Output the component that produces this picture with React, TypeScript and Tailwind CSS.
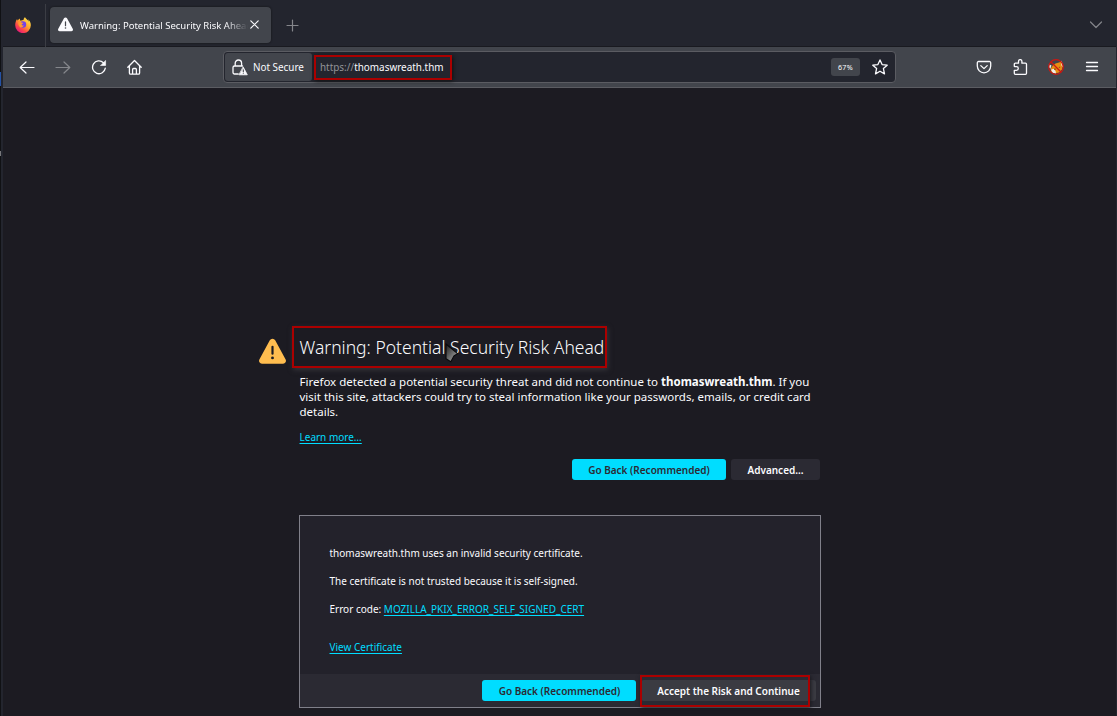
import React from "react";

type IconProps = { className?: string };

const stroke = {
  fill: "none",
  stroke: "currentColor",
  strokeWidth: 1.2,
  strokeLinecap: "round" as const,
  strokeLinejoin: "round" as const,
};

function FirefoxLogo({ className }: IconProps) {
  return (
    <svg viewBox="0 0 16 16" className={className}>
      <defs>
        <linearGradient id="flame" x1="0.85" y1="0.1" x2="0.2" y2="0.95">
          <stop offset="0" stopColor="#ffe14a" />
          <stop offset="0.4" stopColor="#ffa52b" />
          <stop offset="0.7" stopColor="#ff4a48" />
          <stop offset="1" stopColor="#e3157c" />
        </linearGradient>
      </defs>
      <path fill="url(#flame)" d="M15 4.8c-.4-1-1.200-2-1.900-2.300.5 1 .7 1.600.8 2.200C12.500 2 10.800 2 10 .2 9 .9 8.600 2.200 8.500 3 7.400 3 6.500 3.300 5.700 3.800 5 3.300 4.800 2.300 5 1.600 3.900 2 3.100 2.900 2.700 3.500 2.300 3.200 2.200 2.400 2.200 1.900 1 3 .2 5.800.2 8.200A7.800 7.800 0 0 0 15.800 8.400c.1-1.300-.2-2.600-.8-3.600Z" />
      <circle cx="7.900" cy="7.500" r="3.300" fill="#7542e5" />
      <path fill="#ff9a2e" d="M3.300 5.300c1.300-.8 2.500-.4 3.100.2 1 .1 1.800.3 1.900.8-.3.600-1.500.6-1.700 1.300C7 9 8 8.600 8.800 8c-.3 2-2.300 3-3.800 2.200C3.500 9 3.100 7 3.300 5.300Z" />
    </svg>
  );
}

function WarningIcon({ className, mark }: IconProps & { mark: string }) {
  return (
    <svg viewBox="0 0 16 16" className={className}>
      <path fill="currentColor" d="M15.700 12.600 9.600 1.400a1.830 1.830 0 0 0-3.200 0L.3 12.600A1.700 1.700 0 0 0 1.800 15.200h12.400a1.700 1.700 0 0 0 1.500-2.600Z" />
      <path stroke={mark} strokeWidth="1.300" strokeLinecap="round" d="M8 5.200v4.100" />
      <circle cx="8" cy="11.800" r=".85" fill={mark} />
    </svg>
  );
}

function BackIcon({ className }: IconProps) {
  return (
    <svg viewBox="0 0 16 16" className={className} {...stroke}>
      <path d="M15 8.500H1.200M7 3 1.200 8.500 7 14" />
    </svg>
  );
}

function ForwardIcon({ className }: IconProps) {
  return (
    <svg viewBox="0 0 16 16" className={className} {...stroke}>
      <path d="M1 8.500h13.800M9 3l5.800 5.500L9 14" />
    </svg>
  );
}

function ReloadIcon({ className }: IconProps) {
  return (
    <svg viewBox="0 0 16 16" className={className} {...stroke} strokeWidth={1.3}>
      <path d="M14.300 9.200A6.400 6.400 0 1 1 12.400 3.700" />
      <path fill="currentColor" strokeWidth=".6" d="M14.600 1.800v4.700H9.800Z" />
    </svg>
  );
}

function HomeIcon({ className }: IconProps) {
  return (
    <svg viewBox="0 0 16 16" className={className} {...stroke} strokeWidth={1.3}>
      <path d="M.8 8.300 7.500 1.500l6.700 6.800M2.400 7v7a1.200 1.200 0 0 0 1.200 1.200h7.800a1.200 1.200 0 0 0 1.200-1.200V7M5.600 15v-4.500a1 1 0 0 1 1-1h1.800a1 1 0 0 1 1 1V15" />
    </svg>
  );
}

function InsecureLockIcon({ className }: IconProps) {
  return (
    <svg viewBox="0 0 16 17" className={className} {...stroke} strokeWidth={1.3}>
      <path d="M3.200 7V4.200a3.200 3.200 0 0 1 6.400 0V7M6.200 15H2.500a1.500 1.500 0 0 1-1.500-1.500v-5A1.500 1.500 0 0 1 2.500 7h8" />
      <path fill="currentColor" strokeWidth=".8" d="M11.300 8.200 15.300 15.800H7.300Z" />
      <path stroke="#42454c" strokeWidth="1.100" d="M11.300 10.700v2M11.300 14.200v.1" />
    </svg>
  );
}

function StarIcon({ className }: IconProps) {
  return (
    <svg viewBox="0 0 16 16" className={className} {...stroke} strokeWidth={1.3}>
      <path d="m8 .9 2.100 4.700 5.100.6-3.800 3.400 1.100 5.300L8 12.200l-4.500 2.700 1.100-5.300L.8 6.200l5.100-.6Z" />
    </svg>
  );
}

function PocketIcon({ className }: IconProps) {
  return (
    <svg viewBox="0 0 16 16" className={className} {...stroke} strokeWidth={1.3}>
      <path d="M2.600 2.500h10.800a1.300 1.300 0 0 1 1.300 1.300v3.300a6.700 6.700 0 0 1-13.400 0V3.800a1.300 1.300 0 0 1 1.300-1.300ZM4.800 6.600 8 9.600l3.200-3" />
    </svg>
  );
}

function ExtensionIcon({ className }: IconProps) {
  return (
    <svg viewBox="0 0 16 16" className={className} {...stroke} strokeWidth={1.3}>
      <path d="M2.300 6.500V5.200a1 1 0 0 1 1-1h3.200V2.300a1.700 1.700 0 0 1 3.400 0v1.900h3.600a1 1 0 0 1 1 1v9.100a1 1 0 0 1-1 1H3.300a1 1 0 0 1-1-1V11.300h2.200a1.800 1.800 0 0 0 0-3.600H2.800a.5.5 0 0 1-.5-.5Z" />
    </svg>
  );
}

function FoxyProxyIcon({ className }: IconProps) {
  return (
    <svg viewBox="0 0 16 16" className={className}>
      <path fill="#e98d12" d="M4.500 6.700 7.500 4.500 11 3.600 13.800 2.400 14.900 6.500 14 10.500 11 13.500 7 14.500 3.500 13 2.600 10Z" />
      <path fill="#f1eee9" d="m13.200 1.600 1.400 3.200.3 3.400-1.500-1.800ZM.9 5.200l2.600 1.200-1.100 3.400L1.200 8.500ZM3 10.700l2.600-.9 2 2.200.4 2.500-3.300-.8Z" />
      <path fill="#8f4a10" d="m5.700 9.700 1.800-.5.6 1.300-1.500.4ZM10.500 8.500l1.400-1 .3 1.500Z" />
      <circle cx="8" cy="8" r="7.300" fill="none" stroke="#ce1712" strokeWidth="1.200" />
      <path stroke="#ce1712" strokeWidth="1.300" d="m2.800 2.800 10.400 10.400" />
    </svg>
  );
}

function Cursor({ className }: IconProps) {
  return (
    <svg viewBox="0 0 14 20" className={className}>
      <defs>
        <linearGradient id="pointer" x1="0" y1="0" x2=".8" y2="1">
          <stop offset="0" stopColor="#1a1a1a" />
          <stop offset="1" stopColor="#a5a5a5" />
        </linearGradient>
      </defs>
      <path fill="url(#pointer)" stroke="#09090b" strokeWidth="1.100" d="M1 1 12.600 10.600 9 12.800 5.800 18.800 1 15.800Z" />
    </svg>
  );
}

function TabStrip() {
  return (
    <header className="flex h-[47px] shrink-0 items-center border-b border-[#191a20] bg-[#23252e]">
      <div className="flex h-full w-[42px] items-center pl-3 pt-[3px]">
        <FirefoxLogo className="size-4" />
      </div>
      <div className="mt-1 h-[43px] w-px bg-[#3b3d44]" />
      <div className="ml-1 mt-[3px] flex h-9 w-[221px] items-center rounded-[4px] bg-[#42454c] pl-2 shadow-[0_0_2px_#111]">
        <WarningIcon className="size-[15px] shrink-0 text-[#fbfbfe]" mark="#42454c" />
        <span className="ml-[7px] mt-[3px] w-[168px] overflow-hidden whitespace-nowrap text-[9.500px] text-[#fbfbfe] [mask-image:linear-gradient(to_right,black_145px,transparent_168px)]">
          Warning: Potential Security Risk Ahead
        </span>
        <svg viewBox="0 0 9 9" className="ml-[2px] size-[9px] shrink-0 text-[#fbfbfe]" {...stroke}>
          <path d="m.8.8 7.400 7.400M8.200.8.8 8.200" />
        </svg>
      </div>
      <svg viewBox="0 0 13 13" className="ml-[15px] mt-1 size-[13px] text-[#85868b]" {...stroke}>
        <path d="M6.500 1v11M1 6.500h11" />
      </svg>
      <svg viewBox="0 0 14 8" className="mr-[13px] mt-[3px] ml-auto h-2 w-3.5 text-[#84858a]" {...stroke}>
        <path d="m1.500 1 5.500 5.500L12.500 1" />
      </svg>
    </header>
  );
}

function Toolbar() {
  return (
    <nav className="flex h-[41px] shrink-0 items-center border-b border-[#5b5c62] bg-[#42454c] text-[#fbfbfe]">
      <div className="flex w-[220px] items-center gap-5 pl-4">
        <BackIcon className="size-4" />
        <ForwardIcon className="size-4 text-[#85878c]" />
        <ReloadIcon className="size-4" />
        <HomeIcon className="size-4" />
      </div>
      <div className="flex h-8 w-[673px] items-center rounded-[4px] border border-[#5b5c62] bg-[#23252e] p-px">
        <div className="flex h-7 w-[87px] shrink-0 items-center rounded-[3px] bg-[#42454c] pl-[7px]">
          <InsecureLockIcon className="h-[17px] w-4" />
          <span className="ml-[5px] mt-px whitespace-nowrap text-[9.900px]">Not Secure</span>
        </div>
        <div className="ml-[2px] flex h-[25px] w-[138px] shrink-0 items-center border-2 border-[#ab0000] pl-1 shadow-[1px_1px_4px_#111]">
          <span className="whitespace-nowrap text-[9.920px] text-[#fbfbfe]">
            <span className="text-[#929398]">https://</span>thomaswreath.thm
          </span>
        </div>
        <span className="ml-auto flex h-[18px] w-[29px] items-center justify-center rounded-[3px] bg-[#42454c] pt-px text-[7.200px] tracking-[0.300px]">
          67%
        </span>
        <StarIcon className="ml-3 mr-[6px] size-4" />
      </div>
      <div className="ml-auto mr-4 flex items-center gap-5">
        <PocketIcon className="size-4" />
        <ExtensionIcon className="size-4" />
        <FoxyProxyIcon className="size-4" />
        <svg viewBox="0 0 16 16" className="size-4" {...stroke} strokeWidth={1.3}>
          <path d="M2.500 3.500h11M2.500 7.500h11M2.500 11.500h11" />
        </svg>
      </div>
    </nav>
  );
}

function Link({ children }: { children: React.ReactNode }) {
  return (
    <a className="text-[#00ddff] underline decoration-1 underline-offset-2">{children}</a>
  );
}

function CertificatePanel() {
  return (
    <section className="mt-[35px] flex h-[193px] w-[522px] flex-col border border-[#80808a] bg-[#23222b] text-[10px] leading-[14px]">
      <div className="flex-1 pl-[29.500px] pt-[30px]">
        <p>thomaswreath.thm uses an invalid security certificate.</p>
        <p className="mt-[14px]">The certificate is not trusted because it is self-signed.</p>
        <p className="mt-[14px]">
          Error code: <Link>MOZILLA_PKIX_ERROR_SELF_SIGNED_CERT</Link>
        </p>
        <p className="mt-6">
          <Link>View Certificate</Link>
        </p>
      </div>
      <div className="flex h-[33px] items-center bg-[#2b2a33] pl-[182px] text-[10px] font-semibold">
        <button className="h-[21px] w-[154px] shrink-0 rounded-[3px] bg-[#00ddff] pl-px text-[#2b2a33]">
          Go Back (Recommended)
        </button>
        <div className="relative ml-[5px] h-[21px] w-[175px] rounded-[3px] bg-[#3b3b42]">
          <button className="absolute -left-px -top-[5px] flex h-8 w-[170px] items-center justify-center whitespace-nowrap border-2 border-[#ab0000] pl-[7px] shadow-[1px_1px_4px_#18181d]">
            Accept the Risk and Continue
          </button>
        </div>
      </div>
    </section>
  );
}

function ErrorPage() {
  return (
    <main className="flex flex-1 items-start bg-[#1c1b22] pl-[256px] pt-[238px] text-[#fbfbfe]">
      <WarningIcon className="mt-[11.500px] size-[27px] shrink-0 text-[#ffbd4f]" mark="#1c1b22" />
      <div className="ml-[6px] w-[529px]">
        <div className="relative flex h-[42px] w-[315px] items-center border-2 border-[#ab0000] pl-[5.500px] shadow-[1px_2px_5px_#34343a]">
          <h1 className="whitespace-nowrap text-[17.500px] font-light">Warning: Potential Security Risk Ahead</h1>
          <Cursor className="absolute left-[151px] top-[15px] h-5 w-3.5" />
        </div>
        <div className="ml-[7.500px]">
          <p className="mt-[6px] whitespace-nowrap text-[11.510px] leading-[15px]">
            Firefox detected a potential security threat and did not continue to <b className="font-bold">thomaswreath.thm</b>. If you
            <br />
            visit this site, attackers could try to steal information like your passwords, emails, or credit card
            <br />
            details.
          </p>
          <p className="mt-[11px] text-[10px] leading-[14px]">
            <Link>Learn more…</Link>
          </p>
          <div className="mt-[15px] flex w-[520.500px] justify-end gap-[5px] text-[10px] font-semibold">
            <button className="h-[21px] w-[154px] rounded-[3px] bg-[#00ddff] pt-px text-[#2b2a33]">Go Back (Recommended)</button>
            <button className="h-[21px] w-[89px] rounded-[3px] bg-[#2b2a33] pt-px">Advanced…</button>
          </div>
        </div>
        <div className="ml-[7px]">
          <CertificatePanel />
        </div>
      </div>
    </main>
  );
}

export default function App() {
  return (
    <div className="flex h-[716px] w-[1117px] overflow-hidden bg-[#23252e] font-['Noto_Sans',sans-serif]">
      <div className="flex w-[3px] shrink-0 flex-col border-r-2 border-[#23252e] bg-[#101114]">
        <div className="mt-[72px] h-3.5 w-px bg-[#2452a5]" />
        <div className="mt-[65px] h-[5px] w-px bg-[#77777b]" />
      </div>
      <div className="flex w-[1113px] shrink-0 flex-col">
        <TabStrip />
        <Toolbar />
        <ErrorPage />
      </div>
    </div>
  );
}
